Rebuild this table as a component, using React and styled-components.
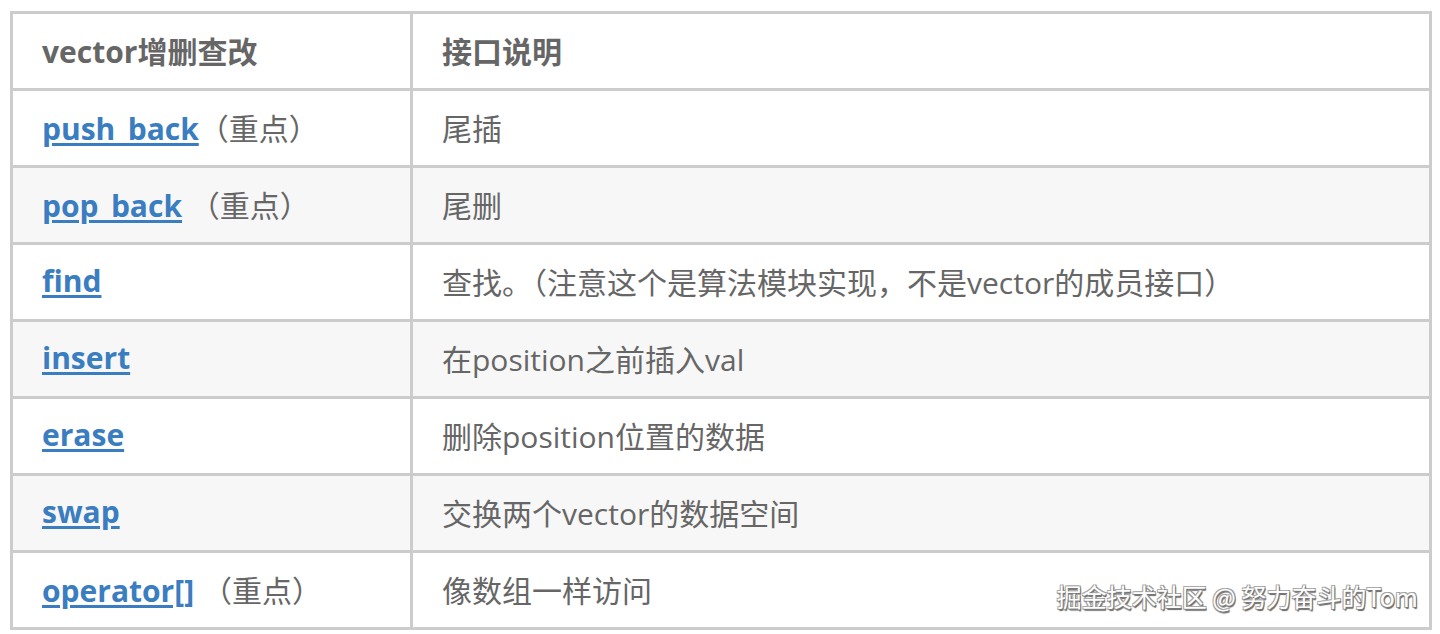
import styled, { createGlobalStyle } from 'styled-components'

const GlobalStyle = createGlobalStyle`
  html, body {
    margin: 0;
    padding: 0;
    background: #ffffff;
  }
  body {
    font-family: "Open Sans", "Noto Sans CJK SC", sans-serif;
  }
`

const Page = styled.div`
  position: relative;
  width: 1440px;
  height: 634px;
  padding: 11px 8px 0 10px;
  box-sizing: border-box;
  overflow: hidden;
`

const Table = styled.table`
  width: 1422px;
  border-collapse: collapse;
  border: 3px solid #cccccc;
  table-layout: fixed;
  font-size: 30px;
  color: #666666;
`

const Row = styled.tr`
  height: 77px;
  background: ${ props => props.$striped ? '#f7f7f7' : '#ffffff' };
`

const Cell = styled.td`
  border: 3px solid #cccccc;
  padding: 0 0 3px 29px;
  vertical-align: middle;
  white-space: nowrap;
  font-weight: ${ props => props.$head ? 700 : 400 };
`

const Link = styled.a`
  color: #3a7dc0;
  font-weight: 700;
  text-decoration: underline;
  text-decoration-thickness: 3px;
  text-underline-offset: 3px;
`

const Watermark = styled.div`
  position: absolute;
  right: 22px;
  bottom: 20px;
  font-family: "Noto Sans CJK SC", sans-serif;
  font-size: 25px;
  color: #ffffff;
  text-shadow: 1px 1px 0 #777, -1px -1px 0 #aaa, 1px -1px 0 #999, -1px 1px 0 #999, 1px 2px 1px #666;
`

const rows = [
  { name: 'push_back', note: '（重点）', desc: '尾插' },
  { name: 'pop_back', note: ' （重点）', desc: '尾删' },
  { name: 'find', note: '', desc: '查找。（注意这个是算法模块实现，不是vector的成员接口）' },
  { name: 'insert', note: '', desc: '在position之前插入val' },
  { name: 'erase', note: '', desc: '删除position位置的数据' },
  { name: 'swap', note: '', desc: '交换两个vector的数据空间' },
  { name: 'operator[]', note: ' （重点）', desc: '像数组一样访问' }
]

function App() {
  return (
    <>
      <GlobalStyle />
      <Page>
        <Table>
          <colgroup>
            <col style={{ width: '400px' }} />
            <col />
          </colgroup>
          <tbody>
            <Row>
              <Cell $head>vector增删查改</Cell>
              <Cell $head>接口说明</Cell>
            </Row>
            { rows.map((r, i) => (
              <Row key={ r.name } $striped={ i % 2 === 1 }>
                <Cell>
                  <Link href="#">{ r.name }</Link>
                  <span style={{ whiteSpace: 'pre' }}>{ r.note }</span>
                </Cell>
                <Cell>{ r.desc }</Cell>
              </Row>
            )) }
          </tbody>
        </Table>
        <Watermark>掘金技术社区 @ 努力奋斗的Tom</Watermark>
      </Page>
    </>
  )
}

export default App
